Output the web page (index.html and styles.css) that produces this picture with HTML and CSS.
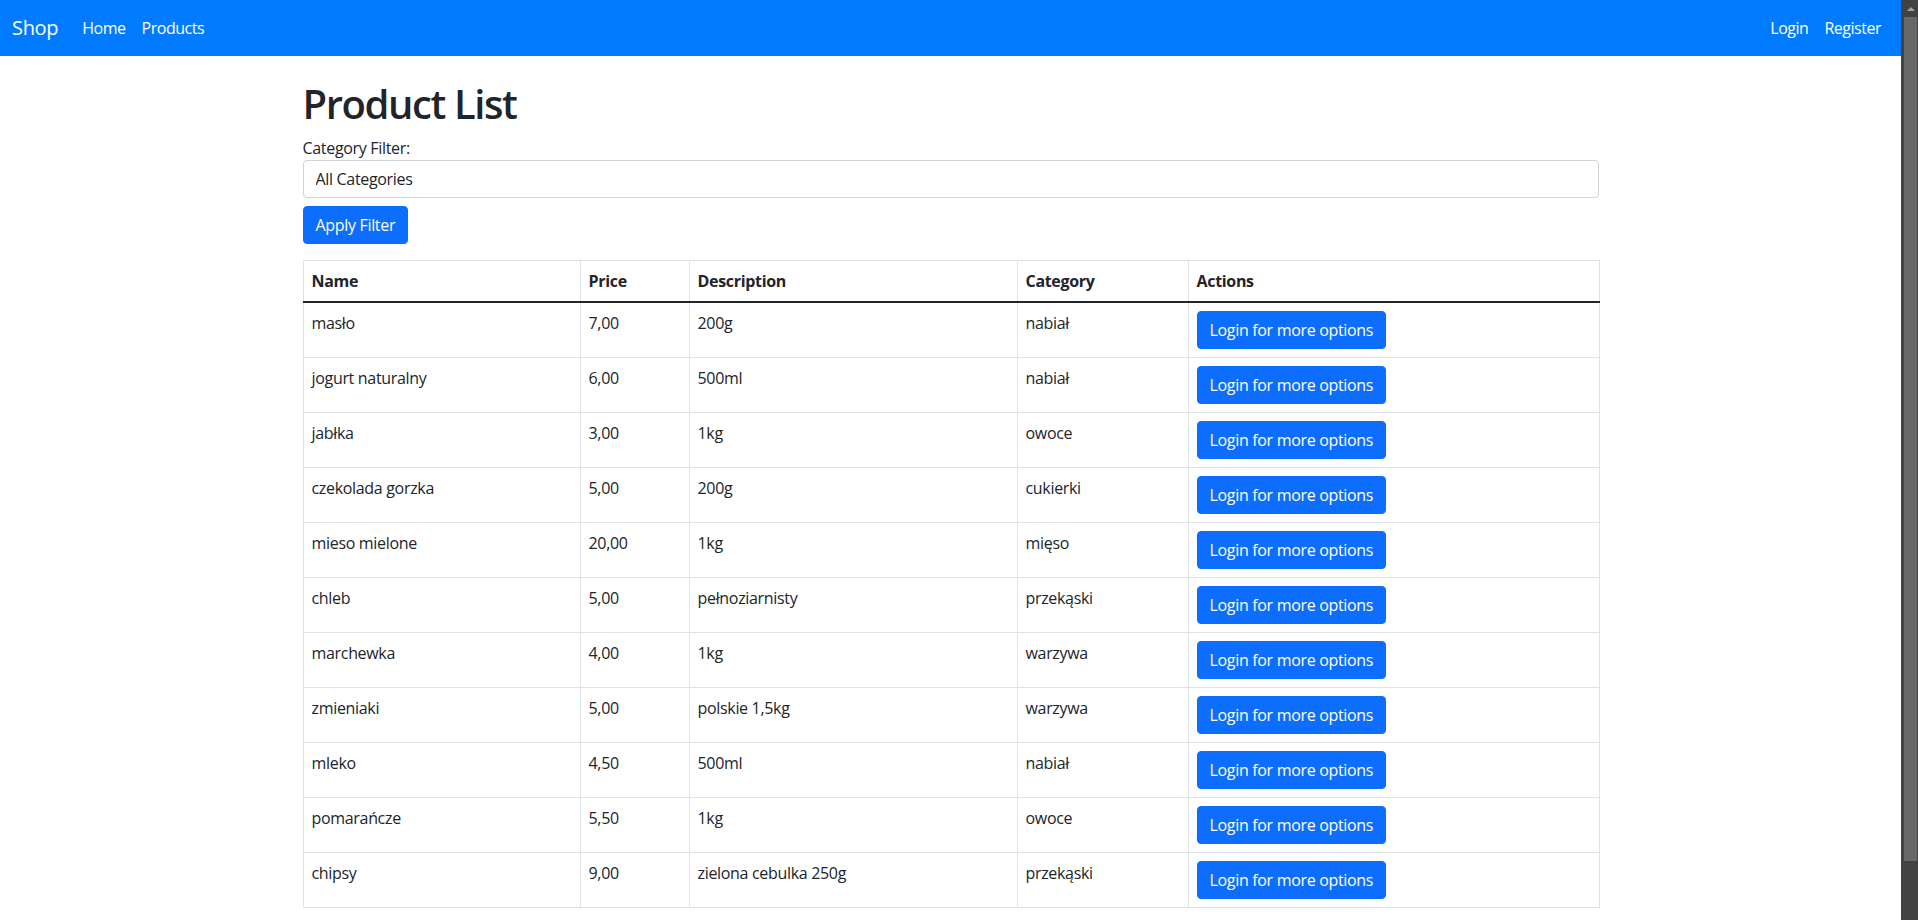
FILE: index.html
```html
<!DOCTYPE html>
<html lang="pl">
<head>
<meta charset="utf-8">
<title>Product List - Shop</title>
<link rel="stylesheet" href="styles.css">
</head>
<body>
<div class="page">
  <header class="navbar">
    <div class="nav-left">
      <a class="brand" href="#">Shop</a>
      <nav class="nav-links">
        <a class="nav-link" href="#">Home</a>
        <a class="nav-link" href="#">Products</a>
      </nav>
    </div>
    <nav class="nav-links">
      <a class="nav-link" href="#">Login</a>
      <a class="nav-link" href="#">Register</a>
    </nav>
  </header>
  <main class="container">
    <h1 class="title">Product List</h1>
    <form class="filter-form">
      <label class="form-label" for="cat">Category Filter:</label>
      <select id="cat" class="form-control">
        <option>All Categories</option>
      </select>
      <button type="button" class="btn">Apply Filter</button>
    </form>
    <table class="table">
      <colgroup>
        <col class="c-name"><col class="c-price"><col class="c-desc"><col class="c-cat"><col class="c-act">
      </colgroup>
      <thead>
        <tr><th>Name</th><th>Price</th><th>Description</th><th>Category</th><th>Actions</th></tr>
      </thead>
      <tbody>
        <tr><td>masło</td><td>7,00</td><td>200g</td><td>nabiał</td><td><button class="btn" type="button">Login for more options</button></td></tr>
        <tr><td>jogurt naturalny</td><td>6,00</td><td>500ml</td><td>nabiał</td><td><button class="btn" type="button">Login for more options</button></td></tr>
        <tr><td>jabłka</td><td>3,00</td><td>1kg</td><td>owoce</td><td><button class="btn" type="button">Login for more options</button></td></tr>
        <tr><td>czekolada gorzka</td><td>5,00</td><td>200g</td><td>cukierki</td><td><button class="btn" type="button">Login for more options</button></td></tr>
        <tr><td>mieso mielone</td><td>20,00</td><td>1kg</td><td>mięso</td><td><button class="btn" type="button">Login for more options</button></td></tr>
        <tr><td>chleb</td><td>5,00</td><td>pełnoziarnisty</td><td>przekąski</td><td><button class="btn" type="button">Login for more options</button></td></tr>
        <tr><td>marchewka</td><td>4,00</td><td>1kg</td><td>warzywa</td><td><button class="btn" type="button">Login for more options</button></td></tr>
        <tr><td>zmieniaki</td><td>5,00</td><td>polskie 1,5kg</td><td>warzywa</td><td><button class="btn" type="button">Login for more options</button></td></tr>
        <tr><td>mleko</td><td>4,50</td><td>500ml</td><td>nabiał</td><td><button class="btn" type="button">Login for more options</button></td></tr>
        <tr><td>pomarańcze</td><td>5,50</td><td>1kg</td><td>owoce</td><td><button class="btn" type="button">Login for more options</button></td></tr>
        <tr><td>chipsy</td><td>9,00</td><td>zielona cebulka 250g</td><td>przekąski</td><td><button class="btn" type="button">Login for more options</button></td></tr>
      </tbody>
    </table>
  </main>
</div>
<div class="scrollbar" aria-hidden="true">
  <div class="sb-arrow"><span class="sb-tri"></span></div>
  <div class="sb-thumb"></div>
</div>
</body>
</html>
```

FILE: styles.css
```css
html {
  font-family: "Open Sans", "Noto Sans", "Liberation Sans", sans-serif;
  overflow: hidden;
}
body {
  margin: 0;
  height: 100vh;
  display: flex;
  overflow: hidden;
  font-size: 16px;
  line-height: 1.5;
  color: #212529;
  background: #fff;
  letter-spacing: -0.02em;
}
a { text-decoration: none; }

.page {
  flex: 1;
  min-width: 0;
  overflow: hidden;
}

/* simulated browser scrollbar */
.scrollbar {
  width: 17px;
  flex: none;
  background: #424242;
  display: flex;
  flex-direction: column;
}
.sb-arrow {
  height: 17px;
  display: flex;
  align-items: center;
  justify-content: center;
  padding-left: 2px;
  box-sizing: border-box;
}
.sb-tri {
  width: 0;
  height: 0;
  border-left: 4px solid transparent;
  border-right: 4px solid transparent;
  border-bottom: 4px solid #a3a3a3;
}
.sb-thumb {
  height: 844px;
  margin: 0 1px 0 3px;
  background: #686868;
}

.navbar {
  display: flex;
  justify-content: space-between;
  align-items: center;
  height: 56px;
  padding: 0 12px;
  background: #007bff;
  box-sizing: border-box;
}
.nav-left {
  display: flex;
  align-items: center;
}
.brand {
  color: #fff;
  font-size: 20px;
  line-height: 30px;
  margin-right: 16px;
}
.nav-links {
  display: flex;
}
.nav-link {
  color: #fff;
  padding: 8px;
  line-height: 24px;
  letter-spacing: -0.03em;
}

.container {
  max-width: 1296px;
  margin: 0 auto;
  padding: 24px 12px 43px;
}
.title {
  margin: 0 0 8px;
  font-size: 40px;
  line-height: 48px;
  font-weight: 600;
  letter-spacing: -0.035em;
}
.filter-form {
  display: flex;
  flex-direction: column;
  align-items: flex-start;
  margin-bottom: 16px;
}
.form-label {
  line-height: 24px;
}
.form-control {
  -webkit-appearance: none;
  appearance: none;
  width: 100%;
  height: 38px;
  box-sizing: border-box;
  padding: 6px 12px;
  font: inherit;
  letter-spacing: inherit;
  color: #212529;
  background: #fff;
  border: 1px solid #ced4da;
  border-radius: 4px;
  margin-bottom: 8px;
}
.btn {
  font: inherit;
  letter-spacing: inherit;
  color: #fff;
  background: #0d6efd;
  border: 1px solid #0d6efd;
  border-radius: 4px;
  padding: 6px 12px;
  line-height: 24px;
  height: 38px;
  box-sizing: border-box;
  white-space: nowrap;
}

.table {
  width: 100%;
  table-layout: fixed;
  border-collapse: collapse;
  border: 1px solid #dee2e6;
  margin-bottom: 16px;
}
.c-name { width: 277px; }
.c-price { width: 109px; }
.c-desc { width: 328px; }
.c-cat { width: 171px; }
.c-act { width: 411px; }
.table th,
.table td {
  border: 1px solid #dee2e6;
  padding: 8px;
  text-align: left;
  vertical-align: top;
}
.table th {
  font-weight: 700;
  vertical-align: bottom;
}
.table thead th {
  border-bottom: 2px solid #212529;
}
```
